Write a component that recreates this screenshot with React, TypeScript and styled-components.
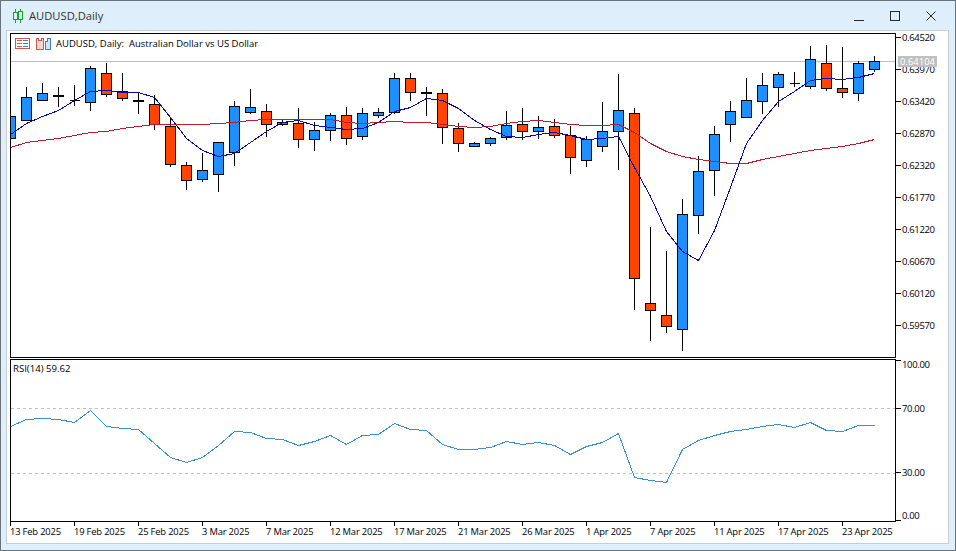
import React from 'react';
import styled, { createGlobalStyle } from 'styled-components';

const GlobalStyle = createGlobalStyle`
  html, body {
    margin: 0;
    padding: 0;
    background: #dfeefb;
  }
`;

const AXIS_FONT = `'Open Sans', 'Noto Sans', sans-serif`;

const Window = styled.div`
  box-sizing: border-box;
  width: 956px;
  height: 551px;
  display: flex;
  flex-direction: column;
  background: #dfeefb;
  border: 1px solid #69737c;
  overflow: hidden;
`;

const TitleBar = styled.div`
  height: 29px;
  flex: none;
  display: flex;
  align-items: center;
  padding: 0 6px 0 11px;
`;

const TitleText = styled.span`
  margin-left: 5px;
  flex: 1;
  font: 11.2px 'Open Sans', sans-serif;
  color: #333;
`;

const CaptionButton = styled.div`
  width: 36px;
  height: 29px;
  display: flex;
  align-items: center;
  justify-content: center;
`;

const Client = styled.div`
  box-sizing: border-box;
  height: 514px;
  margin: 0 6px 0 5px;
  padding: 2px 0 0 3px;
  background: #fff;
  border: 1px solid #c8cdd2;
  display: grid;
  grid-template-columns: 886px 1fr;
  grid-template-rows: 325px 164px 20px;
  flex: none;
`;

const Pane = styled.div`
  box-sizing: border-box;
  position: relative;
  border: 1px solid #000;
  background: #fff;
  overflow: hidden;
`;

const IndicatorPane = styled(Pane)`
  margin-top: 1px;
`;

const Plot = styled.svg`
  display: block;
`;

const Legend = styled.div`
  position: absolute;
  top: 3px;
  left: 4px;
  display: flex;
  align-items: center;
  gap: 4px;
  font: 9.5px ${AXIS_FONT};
  color: #000;
  white-space: pre;
`;

const RsiLegend = styled.div`
  position: absolute;
  top: 2px;
  left: 2px;
  font: 9.6px ${AXIS_FONT};
  color: #000;
`;

const PriceAxis = styled.div`
  position: relative;
  display: flex;
  flex-direction: column;
  gap: 23px;
`;

const RsiAxis = styled.div`
  display: flex;
  flex-direction: column;
  margin-top: 2px;
`;

const AxisRow = styled.div<{ $top?: number; $shift?: number }>`
  height: 9px;
  margin-top: ${(p) => p.$top ?? 0}px;
  display: flex;
  align-items: center;
  gap: 1px;
  font: 9.5px/9px ${AXIS_FONT};
  letter-spacing: -0.35px;
  color: #000;
  &::before {
    content: '';
    width: 5px;
    height: 1px;
    background: #000;
    transform: translateY(${(p) => p.$shift ?? 0}px);
  }
`;

const BidLabel = styled.div`
  position: absolute;
  top: 23px;
  left: 2px;
  width: 39px;
  height: 11px;
  background: #c0c0c0;
  color: #fff;
  font: 9.5px/11px ${AXIS_FONT};
  text-align: center;
`;

const TimeAxis = styled.div`
  grid-column: 1 / 3;
  display: flex;
`;

const TimeCell = styled.div`
  width: 64px;
  flex: none;
  font: 9.4px/10px ${AXIS_FONT};
  letter-spacing: -0.18px;
  color: #000;
  white-space: nowrap;
  &::before {
    content: '';
    display: block;
    width: 1px;
    height: 4px;
    margin-bottom: 1px;
    background: #000;
  }
`;

// high, top, bottom, low (pixels of the screenshot), colour
type Candle = [number, number, number, number, 'b' | 'r'];

const candles: Candle[] = [
  [100, 116, 138, 150, 'b'],
  [87, 97, 120, 121, 'b'],
  [83, 93, 100, 100, 'b'],
  [87, 95, 96, 107, 'b'],
  [85, 100, 100, 106, 'b'],
  [66, 68, 102, 111, 'b'],
  [63, 73, 94, 97, 'r'],
  [73, 91, 98, 101, 'r'],
  [92, 100, 101, 114, 'b'],
  [95, 104, 124, 130, 'r'],
  [118, 126, 164, 167, 'r'],
  [162, 165, 180, 190, 'r'],
  [153, 170, 179, 182, 'b'],
  [142, 142, 174, 192, 'b'],
  [101, 106, 152, 166, 'b'],
  [89, 107, 112, 114, 'b'],
  [104, 111, 124, 137, 'r'],
  [120, 122, 124, 126, 'r'],
  [108, 123, 139, 148, 'r'],
  [122, 130, 139, 151, 'b'],
  [113, 115, 130, 141, 'b'],
  [107, 115, 138, 145, 'r'],
  [108, 113, 136, 140, 'b'],
  [108, 112, 115, 118, 'b'],
  [73, 78, 112, 114, 'b'],
  [73, 78, 92, 101, 'r'],
  [87, 92, 93, 116, 'b'],
  [89, 93, 127, 144, 'r'],
  [123, 128, 143, 152, 'r'],
  [142, 143, 146, 147, 'b'],
  [137, 138, 143, 146, 'b'],
  [111, 125, 137, 140, 'b'],
  [108, 124, 131, 140, 'r'],
  [116, 127, 131, 139, 'b'],
  [119, 126, 135, 138, 'r'],
  [126, 135, 157, 174, 'r'],
  [136, 139, 160, 167, 'b'],
  [102, 131, 146, 152, 'b'],
  [74, 110, 131, 170, 'b'],
  [108, 113, 278, 310, 'r'],
  [227, 303, 310, 341, 'r'],
  [251, 315, 326, 333, 'r'],
  [199, 214, 329, 351, 'b'],
  [156, 171, 215, 234, 'b'],
  [126, 134, 170, 196, 'b'],
  [101, 111, 124, 142, 'b'],
  [78, 100, 117, 118, 'b'],
  [73, 85, 101, 114, 'b'],
  [72, 74, 87, 107, 'b'],
  [72, 83, 83, 87, 'b'],
  [46, 59, 86, 89, 'b'],
  [45, 63, 88, 91, 'r'],
  [47, 88, 92, 98, 'r'],
  [61, 63, 93, 101, 'b'],
  [56, 61, 69, 72, 'b'],
];

const fastMa = [
  134, 123, 116, 110, 100, 91, 90, 92, 92, 97, 117, 138, 150, 156, 153, 142, 131, 122, 120, 125,
  127, 129, 128, 122, 111, 107, 98, 100, 108, 120, 129, 136, 137, 134, 132, 135, 139, 138, 136, 167,
  196, 231, 251, 260, 230, 187, 143, 120, 101, 91, 80, 78, 79, 77, 73,
];

const slowMa = [
  147, 142, 140, 138, 135, 132, 131, 128, 126, 124, 124, 124, 124, 123, 122, 120, 119, 119, 119, 119,
  119, 122, 123, 122, 121, 122, 122, 124, 126, 127, 126, 123, 121, 120, 122, 124, 125, 125, 124, 132,
  143, 151, 156, 159, 161, 163, 163, 159, 156, 153, 150, 148, 146, 143, 139,
];

const rsi = [
  426, 419, 418, 419, 422, 410, 426, 428, 429, 443, 457, 462, 457, 445, 431, 432, 438, 439, 445, 441,
  435, 444, 435, 434, 423, 429, 430, 444, 449, 449, 447, 441, 444, 442, 445, 454, 446, 442, 433, 477,
  480, 482, 449, 440, 435, 431, 429, 426, 424, 427, 422, 430, 431, 425, 425,
];

const prices = ['0.64520', '0.63970', '0.63420', '0.62870', '0.62320', '0.61770', '0.61220', '0.60670', '0.60120', '0.59570'];

const dates = [
  '13 Feb 2025', '19 Feb 2025', '25 Feb 2025', '3 Mar 2025', '7 Mar 2025', '12 Mar 2025', '17 Mar 2025',
  '21 Mar 2025', '26 Mar 2025', '1 Apr 2025', '7 Apr 2025', '11 Apr 2025', '17 Apr 2025', '23 Apr 2025',
];

const centerX = (i: number) => 10 + 16 * i;
const toPoints = (ys: number[]) => ys.map((y, i) => `${centerX(i) + 0.5},${y + 0.5}`).join(' ');

function AppIcon() {
  return (
    <svg width="12" height="14" viewBox="0 0 12 14" fill="none" stroke="#14a828" strokeWidth="1" shapeRendering="crispEdges">
      <path d="M3.5 0v3M3.5 11v3M8.5 0v2M8.5 11v3" />
      <rect x="1.5" y="3.5" width="4" height="7" />
      <rect x="6.5" y="2.5" width="4" height="8" />
    </svg>
  );
}

function CaptionIcon({ kind }: { kind: 'min' | 'max' | 'close' }) {
  return (
    <svg width="10" height="10" viewBox="0 0 10 10" fill="none" stroke="#2b2b2b" strokeWidth="1">
      {kind === 'min' && <path d="M0 9.5h9.5" shapeRendering="crispEdges" />}
      {kind === 'max' && <rect x="0.5" y="0.5" width="8.5" height="8.5" shapeRendering="crispEdges" />}
      {kind === 'close' && <path d="M0.5 0.5l9 9M9.5 0.5l-9 9" />}
    </svg>
  );
}

function TemplateIcons() {
  return (
    <>
      <svg width="15" height="11" viewBox="0 0 15 11" shapeRendering="crispEdges">
        <rect x="0.5" y="0.5" width="14" height="10" fill="#fff" stroke="#d0574b" />
        <path d="M2 2.5h5M2 5.5h5M2 8.5h5" stroke="#d0574b" />
        <path d="M8 2.5h5M8 5.5h5M8 8.5h5" stroke="#3f7fc4" />
      </svg>
      <svg width="16" height="12" viewBox="0 0 16 12" shapeRendering="crispEdges" style={{ marginLeft: 2 }}>
        <path d="M0.5 0.5h2v2h3v-2h2v11h-7z" fill="#f9d3cc" stroke="#d0574b" />
        <path d="M9.5 3.5h2v-3h3v11h-5z" fill="#cfe6f8" stroke="#3f7fc4" />
      </svg>
    </>
  );
}

function PriceChart() {
  return (
    <Plot width="884" height="323" viewBox="11 34 884 323">
      <line x1="11" x2="895" y1="61.5" y2="61.5" stroke="#c0c0c0" shapeRendering="crispEdges" />
      <g shapeRendering="crispEdges">
        {candles.map(([high, top, bottom, low, colour], i) => {
          const c = centerX(i);
          return (
            <g key={i}>
              <line x1={c + 0.5} x2={c + 0.5} y1={high} y2={low} stroke="#000" />
              {bottom === top ? (
                <line x1={c - 4.5} x2={c + 5.5} y1={top + 0.5} y2={top + 0.5} stroke="#000" />
              ) : (
                <rect
                  x={c - 4.5}
                  y={top + 0.5}
                  width="10"
                  height={bottom - top}
                  fill={colour === 'b' ? '#1e8fff' : '#ff4500'}
                  stroke="#000"
                />
              )}
            </g>
          );
        })}
      </g>
      <polyline points={toPoints(slowMa)} fill="none" stroke="#bd1c2c" strokeWidth="1" shapeRendering="crispEdges" />
      <polyline points={toPoints(fastMa)} fill="none" stroke="#0a0aa8" strokeWidth="1" shapeRendering="crispEdges" />
    </Plot>
  );
}

function RsiChart() {
  return (
    <Plot width="884" height="162" viewBox="11 360 884 162">
      <g stroke="#c0c0c0" strokeDasharray="3 3" shapeRendering="crispEdges">
        <line x1="11" x2="895" y1="408.5" y2="408.5" />
        <line x1="11" x2="895" y1="473.5" y2="473.5" />
      </g>
      <polyline points={toPoints(rsi)} fill="none" stroke="#3d8fd3" strokeWidth="1" shapeRendering="crispEdges" />
    </Plot>
  );
}

export default function App(): JSX.Element {
  return (
    <>
      <GlobalStyle />
      <Window>
        <TitleBar>
          <AppIcon />
          <TitleText>AUDUSD,Daily</TitleText>
          <CaptionButton><CaptionIcon kind="min" /></CaptionButton>
          <CaptionButton><CaptionIcon kind="max" /></CaptionButton>
          <CaptionButton><CaptionIcon kind="close" /></CaptionButton>
        </TitleBar>
        <Client>
          <Pane>
            <PriceChart />
            <Legend>
              <TemplateIcons />
              <span>AUDUSD, Daily:  Australian Dollar vs US Dollar</span>
            </Legend>
          </Pane>
          <PriceAxis>
            {prices.map((p) => <AxisRow key={p}>{p}</AxisRow>)}
            <BidLabel>0.64104</BidLabel>
          </PriceAxis>
          <IndicatorPane>
            <RsiChart />
            <RsiLegend>RSI(14) 59.62</RsiLegend>
          </IndicatorPane>
          <RsiAxis>
            <AxisRow $shift={-4}>100.00</AxisRow>
            <AxisRow $top={35}>70.00</AxisRow>
            <AxisRow $top={55}>30.00</AxisRow>
            <AxisRow $top={34} $shift={5}>0.00</AxisRow>
          </RsiAxis>
          <TimeAxis>
            {dates.map((d) => <TimeCell key={d}>{d}</TimeCell>)}
          </TimeAxis>
        </Client>
      </Window>
    </>
  );
}
